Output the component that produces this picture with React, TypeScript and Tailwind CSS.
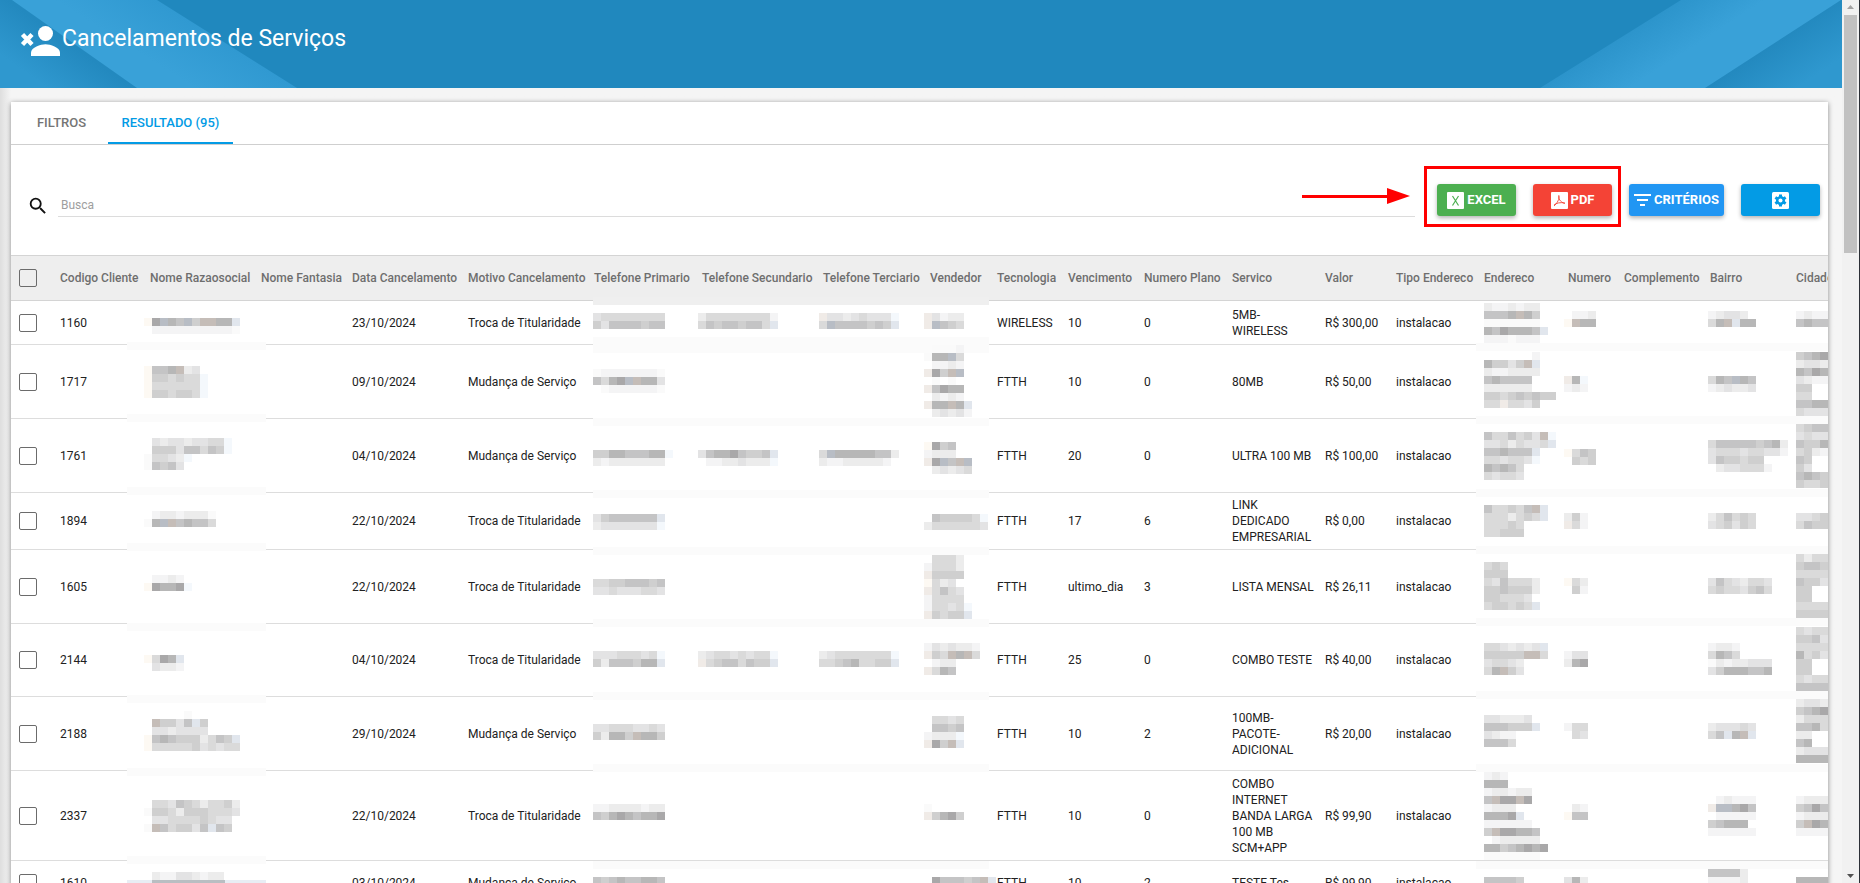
import React from 'react';

// Grey levels used by the censor mosaic, from faint to dark, plus a few tints
const SHADES: Record<string, string> = {
  '1': '#fafafa',
  '2': '#f4f4f5',
  '3': '#ececec',
  '4': '#e3e3e4',
  '5': '#dadada',
  '6': '#cfcfcf',
  '7': '#c4c4c5',
  '8': '#b7b7b7',
  '9': '#a9a8a9',
  o: '#fdf9f3',
  w: '#f0ebe7',
  c: '#f4f8fc',
  p: '#e1e6ed',
  m: '#c5bdb8',
  n: '#b8bdc5',
};

interface Patch {
  x: number;
  y: number;
  rows: string[];
}

interface Region {
  id: string;
  x: number;
  width: number;
  bands: number[];
  patches: Patch[];
}

// Coordinates are relative to the top left corner of the table
const REGIONS: Region[] = [
  {
    id: 'nome',
    x: 116,
    width: 139,
    bands: [87, 159, 232, 288, 368, 440, 513, 601],
    patches: [
      { x: 133, y: 63, rows: ['o9n87n6mm88p', '.22222222221'] },
      { x: 133, y: 111, rows: ['o778m34', 'o665655c', 'o555555c', 'o665665c'] },
      { x: 133, y: 183, rows: ['.434434455c', '.666477576c', '15543c', '17674'] },
      { x: 133, y: 256, rows: ['.23323331', '18nm78775'] },
      { x: 133, y: 320, rows: ['.2232', 'o9889c'] },
      { x: 133, y: 400, rows: ['o598p', '.4332'] },
      { x: 133, y: 456, rows: ['.....1', '.m6647p6', '.4434444', 'o7876663576p', 'o55555645455'] },
      { x: 133, y: 545, rows: ['.55476535563', '166536665554', '.4455556544', '1m756647p76'] },
      { x: 133, y: 617, rows: ['.322443233'] },
    ],
  },
  {
    id: 'telefones',
    x: 582,
    width: 396,
    bands: [82, 90, 163, 235, 292, 364, 437, 509, 606],
    patches: [
      { x: 582, y: 58, rows: ['455555555', '647777677'] },
      { x: 687, y: 58, rows: ['3555555552', '576776775p'] },
      { x: 808, y: 58, rows: ['w44345444c', '5n7777676p'] },
      { x: 913, y: 58, rows: ['w4233', 'wn765'] },
      { x: 582, y: 114, rows: ['122222221', '7589nm884', '.12222221'] },
      { x: 913, y: 90, rows: ['.1112', '188n5', '.2232', 'w96mn', '.1.1', 'w7988', '.3232', 'w88m8p', '.34342'] },
      { x: 582, y: 195, rows: ['668877788c', '323333333'] },
      { x: 687, y: 195, rows: ['478897667p', '.22334333c'] },
      { x: 808, y: 195, rows: ['5n88888773', '322333332.'] },
      { x: 913, y: 187, rows: ['o967', '2333', 'w9n7mn', '.34345'] },
      { x: 582, y: 259, rows: ['46777777p', '34444444c'] },
      { x: 913, y: 259, rows: ['.766665c', '35555554'] },
      { x: 582, y: 324, rows: ['556677767', '445444554'] },
      { x: 913, y: 300, rows: ['.5553', '25553', 'w6666', 'o534', 'w5754', '25555', '25545c', 'w6566p'] },
      { x: 582, y: 396, rows: ['44455545c', '63777688p'] },
      { x: 687, y: 396, rows: ['345545455c', 'w56775766p'] },
      { x: 808, y: 396, rows: ['345555555c', '556785566p'] },
      { x: 913, y: 388, rows: ['2434332', 'w65m8m5', '.233', 'w587'] },
      { x: 582, y: 469, rows: ['445554454', '63886m886'] },
      { x: 913, y: 461, rows: ['.5545', '.7767', '2333c', 'w96mp'] },
      { x: 582, y: 549, rows: ['223333233', '768987889'] },
      { x: 913, y: 549, rows: ['1.', 'w6896'] },
      { x: 582, y: 622, rows: ['767877887'] },
      { x: 913, y: 622, rows: ['.977767mp'] },
    ],
  },
  {
    id: 'endereco',
    x: 1465,
    width: 352,
    bands: [88, 161, 234, 291, 363, 436, 509, 606],
    patches: [
      { x: 1473, y: 48, rows: ['3223233', '7778m86', '1111111', '8798887p', '2221222'] },
      { x: 1553, y: 56, rows: ['.223', 'om88'] },
      { x: 1697, y: 56, rows: ['23443', '58mp88'] },
      { x: 1785, y: 56, rows: ['2322', '7877'] },
      { x: 1473, y: 97, rows: ['......2', '86646mp', '3223333', '787777', '333333', '665676766', '55w5546'] },
      { x: 1553, y: 121, rows: ['w8c', '232'] },
      { x: 1697, y: 121, rows: ['587n87', '234334'] },
      { x: 1785, y: 97, rows: ['6789', '3443', '8798', '4322', '66', '55', '7788', '5444'] },
      { x: 1473, y: 177, rows: ['7557564mc', '44535445p', '778777p', '554554c', '87875', '54554'] },
      { x: 1553, y: 194, rows: ['o576', '.656'] },
      { x: 1697, y: 185, rows: ['5777776783', '4555455442', '4766566', '.3445552'] },
      { x: 1785, y: 169, rows: ['5677', '4544', '7668', '5632', '76', '64', '7876', '6556'] },
      { x: 1473, y: 250, rows: ['755657mp', '5553565p', '55565', '55666'] },
      { x: 1553, y: 258, rows: ['362', 'w52'] },
      { x: 1697, y: 258, rows: ['357565', '456465'] },
      { x: 1785, y: 258, rows: ['4456', '5766'] },
      { x: 1473, y: 307, rows: ['565', '666', '5475553', '6676663', '665554', '566565p'] },
      { x: 1553, y: 323, rows: ['o53', '.62'] },
      { x: 1697, y: 323, rows: ['47543554', '56554675'] },
      { x: 1785, y: 299, rows: ['5355', '6776', '5555', '7664', '66', '66', '5555', '6666'] },
      { x: 1473, y: 388, rows: ['5543434p', '66666mm5', '45543', '58m64'] },
      { x: 1553, y: 396, rows: ['244', '389'] },
      { x: 1697, y: 388, rows: ['2332', '5875', '13233444', '46888778'] },
      { x: 1785, y: 372, rows: ['5455', '6674', '5555', '8564', '66', '66', '5455', '7777'] },
      { x: 1473, y: 460, rows: ['443334', '777666p', '4322', '7775'] },
      { x: 1553, y: 468, rows: ['255', '.54'] },
      { x: 1697, y: 468, rows: ['344454', '57p8mp'] },
      { x: 1785, y: 444, rows: ['3443', '6789', '3555', '7785', '33', '78', '3444', '8888'] },
      { x: 1473, y: 517, rows: ['232', '888', '233233', '7m99m9', '2333', '8889p', '222222', '6m99887', '.233333', '88678989', '1111111'] },
      { x: 1553, y: 549, rows: ['.32', 'o77'] },
      { x: 1697, y: 541, rows: ['.23222', 'wnn897', '.22222', '67888', '222222'] },
      { x: 1785, y: 541, rows: ['2333', '6797', '2333', '6m98', '2222'] },
      { x: 1473, y: 622, rows: ['77776'] },
      { x: 1553, y: 622, rows: ['483'] },
      { x: 1697, y: 614, rows: ['77773', '22223'] },
      { x: 1785, y: 622, rows: ['8888'] },
    ],
  },
];

const CELL = 8;

const Mosaic: React.FC<{ region: Region }> = ({ region }) => (
  <g shapeRendering="crispEdges">
    {region.bands.map((y) => (
      <rect key={y} x={region.x} y={y} width={region.width} height={CELL} fill="#fbfbfb" />
    ))}
    {region.patches.map((patch) =>
      patch.rows.map((row, r) =>
        row.split('').map((shade, c) =>
          SHADES[shade] ? (
            <rect
              key={`${patch.x}-${patch.y}-${r}-${c}`}
              x={patch.x + c * CELL}
              y={patch.y + r * CELL}
              width={CELL}
              height={CELL}
              fill={SHADES[shade]}
            />
          ) : null
        )
      )
    )}
  </g>
);

const COLUMNS = [
  { label: 'Codigo Cliente', width: 'w-[90px]' },
  { label: 'Nome Razaosocial', width: 'w-[111px]' },
  { label: 'Nome Fantasia', width: 'w-[91px]' },
  { label: 'Data Cancelamento', width: 'w-[116px]' },
  { label: 'Motivo Cancelamento', width: 'w-[126px]' },
  { label: 'Telefone Primario', width: 'w-[108px]' },
  { label: 'Telefone Secundario', width: 'w-[121px]' },
  { label: 'Telefone Terciario', width: 'w-[107px]' },
  { label: 'Vendedor', width: 'w-[67px]' },
  { label: 'Tecnologia', width: 'w-[71px]' },
  { label: 'Vencimento', width: 'w-[76px]' },
  { label: 'Numero Plano', width: 'w-[88px]' },
  { label: 'Servico', width: 'w-[93px]' },
  { label: 'Valor', width: 'w-[71px]' },
  { label: 'Tipo Endereco', width: 'w-[88px]' },
  { label: 'Endereco', width: 'w-[84px]' },
  { label: 'Numero', width: 'w-[56px]' },
  { label: 'Complemento', width: 'w-[86px]' },
  { label: 'Bairro', width: 'w-[86px]' },
  { label: 'Cidade', width: 'w-[87px]' },
];

interface Cancelamento {
  codigo: string;
  data: string;
  motivo: string;
  tecnologia: string;
  vencimento: string;
  plano: string;
  servico: string;
  valor: string;
  height: string;
}

const CANCELAMENTOS: Cancelamento[] = [
  { codigo: '1160', data: '23/10/2024', motivo: 'Troca de Titularidade', tecnologia: 'WIRELESS', vencimento: '10', plano: '0', servico: '5MB-\nWIRELESS', valor: 'R$ 300,00', height: 'h-[44px]' },
  { codigo: '1717', data: '09/10/2024', motivo: 'Mudança de Serviço', tecnologia: 'FTTH', vencimento: '10', plano: '0', servico: '80MB', valor: 'R$ 50,00', height: 'h-[74px]' },
  { codigo: '1761', data: '04/10/2024', motivo: 'Mudança de Serviço', tecnologia: 'FTTH', vencimento: '20', plano: '0', servico: 'ULTRA 100 MB', valor: 'R$ 100,00', height: 'h-[74px]' },
  { codigo: '1894', data: '22/10/2024', motivo: 'Troca de Titularidade', tecnologia: 'FTTH', vencimento: '17', plano: '6', servico: 'LINK\nDEDICADO\nEMPRESARIAL', valor: 'R$ 0,00', height: 'h-[57px]' },
  { codigo: '1605', data: '22/10/2024', motivo: 'Troca de Titularidade', tecnologia: 'FTTH', vencimento: 'ultimo_dia', plano: '3', servico: 'LISTA MENSAL', valor: 'R$ 26,11', height: 'h-[74px]' },
  { codigo: '2144', data: '04/10/2024', motivo: 'Troca de Titularidade', tecnologia: 'FTTH', vencimento: '25', plano: '0', servico: 'COMBO TESTE', valor: 'R$ 40,00', height: 'h-[73px]' },
  { codigo: '2188', data: '29/10/2024', motivo: 'Mudança de Serviço', tecnologia: 'FTTH', vencimento: '10', plano: '2', servico: '100MB-\nPACOTE-\nADICIONAL', valor: 'R$ 20,00', height: 'h-[74px]' },
  { codigo: '2337', data: '22/10/2024', motivo: 'Troca de Titularidade', tecnologia: 'FTTH', vencimento: '10', plano: '0', servico: 'COMBO\nINTERNET\nBANDA LARGA\n100 MB\nSCM+APP', valor: 'R$ 99,90', height: 'h-[90px]' },
  { codigo: '1610', data: '03/10/2024', motivo: 'Mudança de Serviço', tecnologia: 'FTTH', vencimento: '10', plano: '2', servico: 'TESTE Tes', valor: 'R$ 99,90', height: 'h-[44px]' },
];

const Checkbox: React.FC<{ label: string }> = ({ label }) => (
  <input
    type="checkbox"
    aria-label={label}
    className="block size-[18px] appearance-none rounded-xs border border-[#6b6b6b] bg-transparent"
  />
);

const Header = () => (
  <header className="relative h-[88px] overflow-hidden bg-[#2088be]">
    <svg className="absolute top-0 left-0" width="300" height="88" viewBox="0 0 300 88" aria-hidden="true">
      <defs>
        <linearGradient id="foldLeft" gradientUnits="userSpaceOnUse" x1="70" y1="44" x2="42" y2="84">
          <stop offset="0" stopColor="#2389bf" />
          <stop offset="1" stopColor="#2f98cf" />
        </linearGradient>
        <linearGradient id="bandLeft" gradientUnits="userSpaceOnUse" x1="227" y1="44" x2="198" y2="90">
          <stop offset="0" stopColor="#3099d1" />
          <stop offset="1" stopColor="#39a1d8" />
        </linearGradient>
      </defs>
      <path d="M0 0H157L297 88H0Z" fill="url(#bandLeft)" />
      <path d="M0 0H12L137 88H0Z" fill="url(#foldLeft)" />
    </svg>
    <svg className="absolute top-0 right-0" width="304" height="88" viewBox="0 0 304 88" aria-hidden="true">
      <defs>
        <linearGradient id="foldRight" gradientUnits="userSpaceOnUse" x1="234" y1="44" x2="262" y2="86">
          <stop offset="0" stopColor="#2389bf" />
          <stop offset="1" stopColor="#2f98cf" />
        </linearGradient>
        <linearGradient id="bandRight" gradientUnits="userSpaceOnUse" x1="72" y1="44" x2="98" y2="84">
          <stop offset="0" stopColor="#2c94cb" />
          <stop offset="1" stopColor="#39a1d8" />
        </linearGradient>
      </defs>
      <path d="M143 0H304V88H2Z" fill="url(#bandRight)" />
      <path d="M303 0H304V88H167Z" fill="url(#foldRight)" />
    </svg>
    <div className="relative flex items-start gap-0.5 pt-6 pl-[19px] text-white">
      <svg width="41" height="33" viewBox="0 0 41 33" fill="currentColor" aria-hidden="true">
        <circle cx="26.5" cy="9.5" r="7.5" />
        <path d="M12 32v-3.500c0-5 9.800-8.200 14.500-8.200S41 23.500 41 28.500V32z" />
        <path d="M3.500 10.500l9.500 10M13 10.500l-9.500 10" stroke="currentColor" strokeWidth="4.400" />
      </svg>
      <h1 className="text-[23px] leading-[30px]">Cancelamentos de Serviços</h1>
    </div>
  </header>
);

const Tabs = () => (
  <nav className="flex h-[43px] gap-[7px] border-b border-[#cfcfcf] pl-[11px] text-[13px] font-medium">
    <button type="button" className="w-[79px] text-[#757575]">FILTROS</button>
    <button type="button" className="w-[125px] border-b-2 border-[#039be5] pt-0.5 text-[#039be5]">RESULTADO (95)</button>
  </nav>
);

const BUTTON = 'flex h-8 items-center justify-center rounded-[3px] text-[13px] font-bold text-white shadow-[0_2px_4px_rgba(0,0,0,0.3)]';

const Toolbar = () => (
  <div className="relative flex h-[110px] items-start pt-[39px] pr-2 pl-4">
    <svg className="mt-[11px] mr-[9px] shrink-0" width="22" height="22" viewBox="0 0 24 24" fill="#111" aria-hidden="true">
      <path d="M15.500 14h-.79l-.28-.27A6.471 6.471 0 0 0 16 9.500 6.500 6.500 0 1 0 9.500 16c1.610 0 3.090-.59 4.230-1.570l.27.28v.79l5 4.990L20.490 19l-4.990-5zm-6 0C7.010 14 5 11.990 5 9.500S7.010 5 9.500 5 14 7.010 14 9.500 11.990 14 9.500 14z" />
    </svg>
    <input
      type="text"
      aria-label="Busca"
      placeholder="Busca"
      className="mr-[22px] h-[33px] min-w-0 flex-1 border-b border-[#dcdcdc] pt-2.5 pl-[3px] text-xs outline-none placeholder:text-[#9e9e9e]"
    />
    <div className="flex gap-[17px]">
      <button type="button" className={`${BUTTON} w-[79px] gap-[3px] bg-[#4caf50]`}>
        <svg width="17" height="17" viewBox="0 0 17 17" aria-hidden="true">
          <rect width="17" height="17" rx="1" fill="#fff" />
          <path d="M5.500 4l6 9.500M11.500 4l-6 9.500" stroke="#4caf50" strokeWidth="1.200" />
        </svg>
        EXCEL
      </button>
      <button type="button" className={`${BUTTON} w-[79px] gap-[3px] bg-[#f44336]`}>
        <svg width="17" height="17" viewBox="0 0 17 17" aria-hidden="true">
          <rect width="17" height="17" rx="1" fill="#fff" />
          <path d="M7.800 3.500c-.6 3 1.200 6.500 6 8M7.800 3.500c1.200 3-1.800 8-4.800 10.500M3 13c2-1.800 6-3 11-2" fill="none" stroke="#f44336" strokeWidth=".9" />
        </svg>
        PDF
      </button>
      <button type="button" className={`${BUTTON} w-[95px] gap-[3px] bg-[#2196f3]`}>
        <svg width="17" height="12" viewBox="0 0 17 12" fill="#fff" aria-hidden="true">
          <path d="M0 0h17v2H0zM3 5h11v2H3zM6 10h5v2H6z" />
        </svg>
        CRITÉRIOS
      </button>
      <button type="button" aria-label="Configurações" className={`${BUTTON} w-[79px] bg-[#039be5]`}>
        <svg width="17" height="17" viewBox="0 0 17 17" aria-hidden="true">
          <rect width="17" height="17" rx="1.500" fill="#fff" />
          <g fill="#039be5">
            <circle cx="8.500" cy="8.500" r="4.500" />
            <path d="M7 2.500h3v12H7z" />
            <path d="M7 2.500h3v12H7z" transform="rotate(60 8.500 8.500)" />
            <path d="M7 2.500h3v12H7z" transform="rotate(120 8.500 8.500)" />
          </g>
          <circle cx="8.500" cy="8.500" r="2" fill="#fff" />
        </svg>
      </button>
    </div>
    {/* Callout around the export buttons */}
    <svg className="pointer-events-none absolute top-[21px] right-[207px]" width="320" height="62" viewBox="0 0 320 62" aria-hidden="true">
      <rect x="124.500" y="1.500" width="194" height="58" fill="none" stroke="#f00" strokeWidth="3" />
      <path d="M1 29h85v3H1z" fill="#f00" />
      <path d="M86 22l23 8L86 38z" fill="#f00" />
    </svg>
  </div>
);

const ResultTable = () => (
  <div className="relative overflow-hidden">
    <table className="w-[1840px] table-fixed border-collapse text-left text-xs leading-4 text-[#212121]">
      <colgroup>
        <col className="w-[42px]" />
        {COLUMNS.map((column) => (
          <col key={column.label} className={column.width} />
        ))}
      </colgroup>
      <thead>
        <tr className="h-[45px] border-y border-[#d4d4d4] bg-[#eeeeee] text-[#6e6e6e]">
          <th className="pl-2"><Checkbox label="Selecionar todos" /></th>
          {COLUMNS.map((column) => (
            <th key={column.label} className="px-[7px] font-medium whitespace-nowrap">{column.label}</th>
          ))}
        </tr>
      </thead>
      <tbody>
        {CANCELAMENTOS.map((item) => (
          <tr key={item.codigo} className={`${item.height} border-b border-[#dddddd]`}>
            <td className="pl-2"><Checkbox label={`Selecionar ${item.codigo}`} /></td>
            <td className="px-[7px]">{item.codigo}</td>
            <td />
            <td />
            <td className="px-[7px]">{item.data}</td>
            <td className="px-[7px] whitespace-nowrap">{item.motivo}</td>
            <td />
            <td />
            <td />
            <td />
            <td className="px-[7px]">{item.tecnologia}</td>
            <td className="px-[7px]">{item.vencimento}</td>
            <td className="px-[7px]">{item.plano}</td>
            <td className="px-[7px] whitespace-pre">{item.servico}</td>
            <td className="px-[7px] whitespace-nowrap">{item.valor}</td>
            <td className="px-[7px]">instalacao</td>
            <td />
            <td />
            <td />
            <td />
            <td />
          </tr>
        ))}
      </tbody>
    </table>
    {/* Mosaic that hides the personal data */}
    <svg className="pointer-events-none absolute top-0 left-0" width="1818" height="640" aria-hidden="true">
      <rect x="582" y="42" width="396" height="8" fill="#efefef" />
      <rect x="116" y="625" width="139" height="8" fill="#e8edf4" />
      <rect x="141" y="625" width="73" height="8" fill="#b9bec2" />
      {REGIONS.map((region) => (
        <Mosaic key={region.id} region={region} />
      ))}
    </svg>
  </div>
);

const Scrollbar = () => (
  <div className="flex w-[18px] shrink-0 flex-col items-center border-r border-[#2b2f36] bg-[#f1f1f1]" aria-hidden="true">
    <svg width="13" height="15" viewBox="0 0 13 15"><path d="M3 9l3.500-4L10 9z" fill="#a3a3a3" /></svg>
    <div className="h-[238px] w-[13px] bg-[#c1c1c1]" />
    <svg className="mt-auto" width="13" height="15" viewBox="0 0 13 15"><path d="M3 6l3.500 4L10 6z" fill="#505050" /></svg>
  </div>
);

const App: React.FC = () => (
  <div className="flex h-screen overflow-hidden bg-[#f5f5f5] font-['Roboto',sans-serif]">
    <div className="min-w-0 flex-1 overflow-hidden">
      <Header />
      <main className="bg-linear-to-r from-[#dedede] to-[#f5f5f5] to-[11px] pt-[14px] pr-[14px] pl-[11px]">
        <section className="overflow-hidden bg-white shadow-[0_1px_5px_rgba(0,0,0,0.45)]">
          <Tabs />
          <Toolbar />
          <ResultTable />
        </section>
      </main>
    </div>
    <Scrollbar />
  </div>
);

export default App;
